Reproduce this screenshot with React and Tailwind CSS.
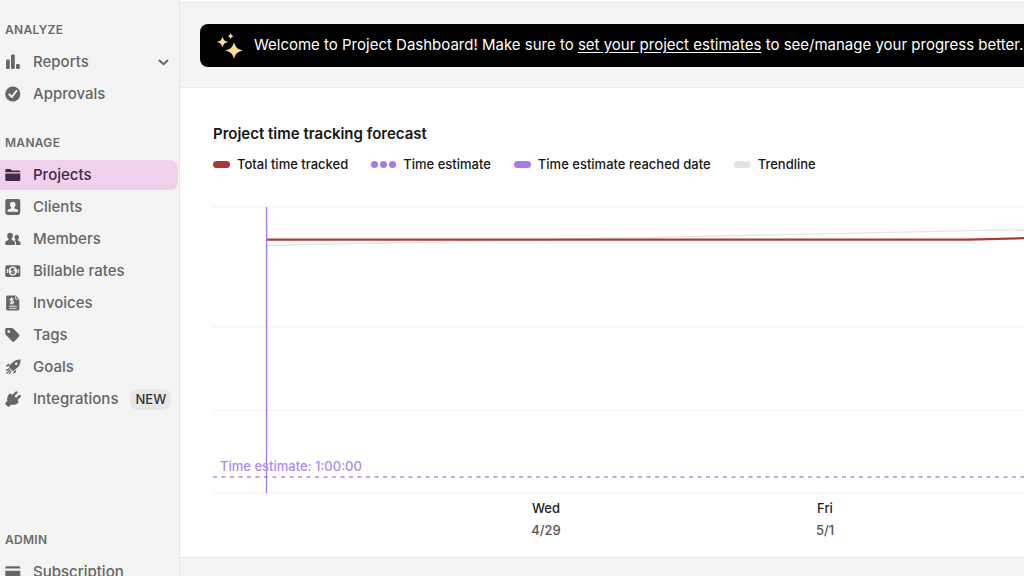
import React from 'react'

function Icon({ children }) {
    return (
        <svg viewBox="0 0 16 16" className="size-4 shrink-0" fill="currentColor" aria-hidden="true">
            {children}
        </svg>
    )
}

const icons = {
    reports: (
        <Icon>
            <rect x="1" y="5.5" width="3.8" height="9.5" rx="1.3" />
            <rect x="6" y="0.5" width="3.8" height="14.5" rx="1.3" />
            <rect x="11" y="10" width="3.8" height="5" rx="1.3" />
        </Icon>
    ),
    approvals: (
        <Icon>
            <circle cx="7.8" cy="8" r="7.6" />
            <path d="M4.2 8.4 6.8 11l4.6-6" fill="none" stroke="#f4f4f4" strokeWidth="2" strokeLinecap="round" strokeLinejoin="round" />
        </Icon>
    ),
    projects: (
        <Icon>
            <path d="M1.5 2h3.6c.5 0 .8.2 1.1.6l.6.9h7c.9 0 1.5.6 1.5 1.3v.5H.3V3.2C.3 2.5.8 2 1.5 2Z" />
            <path d="M.3 6.5h15v6.2c0 .8-.6 1.4-1.4 1.4H1.7c-.8 0-1.4-.6-1.4-1.4Z" />
        </Icon>
    ),
    clients: (
        <Icon>
            <rect x="0.3" y="0" width="15" height="16" rx="2.4" />
            <path d="M7.8 2.8c1.7 0 2.8 1.1 2.8 2.8 0 1.1-.5 2.1-1.2 2.7v1.1c1.6.4 3 .9 3.6 1.6v1.7H2.6V11c.6-.7 2-1.2 3.6-1.6V8.3c-.7-.6-1.2-1.6-1.2-2.7 0-1.7 1.1-2.8 2.8-2.8Z" fill="#f4f4f4" />
        </Icon>
    ),
    members: (
        <Icon>
            <path d="M5 1.8c1.7 0 2.9 1.200 2.900 3 0 1.200-.5 2.200-1.200 2.800v1.500c2 .6 3.200 1.200 3.200 2.700v2.300H.3v-2.300c0-1.500 1.200-2.100 3.200-2.700V7.600C2.700 7 2.200 6 2.200 4.800c0-1.800 1.200-3 2.800-3Z" />
            <path d="M11.700 3.800c1.400 0 2.300 1 2.300 2.400 0 .9-.4 1.700-1 2.200v1.300c1.500.4 2.500 1 2.500 2.200v2.200h-4.600v-2.300c0-1-.4-1.700-1.200-2.300l.8-.8V8.400c-.6-.5-1-1.300-1-2.200 0-1.400.9-2.400 2.200-2.400Z" />
        </Icon>
    ),
    rates: (
        <Icon>
            <rect x="0.3" y="2.3" width="15" height="11.6" rx="1.6" />
            <ellipse cx="7.8" cy="8.1" rx="4.300" ry="4.600" fill="#f4f4f4" />
            <path d="M2.300 6v4M13.300 6v4" stroke="#f4f4f4" strokeWidth="1.100" />
            <path d="M9.600 6.500c-.4-.6-1-.8-1.800-.8-1 0-1.700.4-1.700 1.100 0 1.700 3.500.8 3.500 2.500 0 .8-.8 1.200-1.800 1.200-.8 0-1.500-.3-1.900-.9M7.800 4.800v6.600" fill="none" stroke="currentColor" strokeWidth="1.200" />
        </Icon>
    ),
    invoices: (
        <Icon>
            <path d="M2.700.5h8l3.600 3.600v9.700c0 1-.7 1.700-1.600 1.700h-10c-.9 0-1.600-.7-1.600-1.700V2.200c0-1 .7-1.700 1.600-1.700Z" />
            <path d="M10.700.8v3.400h3.500" fill="none" stroke="#f4f4f4" strokeWidth=".8" />
            <path d="M8.400 4.400c-.4-.6-1-.8-1.600-.8-1 0-1.700.4-1.700 1.100 0 1.700 3.500.8 3.500 2.500 0 .8-.8 1.200-1.800 1.200-.8 0-1.500-.3-1.900-.9M6.700 2.500v7" fill="none" stroke="#f4f4f4" strokeWidth="1.200" />
            <path d="M4 11.200h7.600M4 13.300h7.600" stroke="#f4f4f4" strokeWidth=".9" />
        </Icon>
    ),
    tags: (
        <Icon>
            <path fillRule="evenodd" d="M1.600 1h5.200c.6 0 1.100.2 1.500.6l5.600 5.700c.7.700.7 1.700 0 2.400l-4.400 4.500c-.7.700-1.700.7-2.400 0L.9 8.100C.5 7.700.2 7.200.2 6.600V2.400C.2 1.600.8 1 1.600 1Zm2.200 2.200a1.400 1.400 0 1 0 0 2.800 1.400 1.400 0 0 0 0-2.800Z" />
        </Icon>
    ),
    goals: (
        <Icon>
            <path fillRule="evenodd" d="M15.500.4c.2 4-1 6.700-4.700 9.700L8 12.200 3.800 8l2-2.900C8.700 1.600 11.500.4 15.500.4Zm-4.300 3a1.300 1.300 0 1 0 0 2.600 1.300 1.300 0 0 0 0-2.600Z" />
            <path d="M4.900 4.900 3.600 7.200.7 7.500l1.800-2.200c.6-.6 1.400-.6 2.400-.4ZM11 11.100l-2.300 1.300-.3 2.900 2.200-1.800c.6-.6.6-1.400.4-2.400Z" />
            <path d="m4 9.500-2.600 2M6.300 12l-2 2.700M4.800 11l-3 3.300" stroke="currentColor" strokeWidth="1.200" strokeLinecap="round" />
        </Icon>
    ),
    integrations: (
        <Icon>
            <path d="m5 2.200 8.800 8.700c-1.800 2.200-4.700 3.400-7.600 2.800l-1.800 1.800c-.5.5-1.100.5-1.600 0L.5 13.300c-.5-.5-.5-1.100 0-1.600l1.800-1.800C1.500 7 2.900 4 5 2.200Z" />
            <path d="M8 5 11.300 1.500M11.300 8.500l3.400-3.400" stroke="currentColor" strokeWidth="2.500" strokeLinecap="round" />
            <path d="M5.600 3 8.300 3.900l4 4 .9 2.800Z" />
        </Icon>
    ),
    subscription: (
        <Icon>
            <path d="M1.900 2.200h11.800c.9 0 1.600.6 1.600 1.500v.9H.3v-.9c0-.9.7-1.500 1.600-1.500ZM.3 6.700h15v5.600c0 .9-.7 1.500-1.600 1.500H1.900c-.9 0-1.600-.6-1.600-1.500Z" />
        </Icon>
    ),
}

const sections = [
    {
        title: 'Analyze',
        items: [
            { label: 'Reports', icon: icons.reports, expandable: true },
            { label: 'Approvals', icon: icons.approvals },
        ],
    },
    {
        title: 'Manage',
        items: [
            { label: 'Projects', icon: icons.projects, active: true },
            { label: 'Clients', icon: icons.clients },
            { label: 'Members', icon: icons.members },
            { label: 'Billable rates', icon: icons.rates },
            { label: 'Invoices', icon: icons.invoices },
            { label: 'Tags', icon: icons.tags },
            { label: 'Goals', icon: icons.goals },
            { label: 'Integrations', icon: icons.integrations, badge: 'NEW' },
        ],
    },
    {
        title: 'Admin',
        items: [{ label: 'Subscription', icon: icons.subscription }],
    },
]

function NavItem({ item }) {
    return (
        <li>
            <a
                href="#"
                aria-current={item.active ? 'page' : undefined}
                className={
                    item.active
                        ? 'flex h-[30px] items-center gap-3 rounded-r-lg bg-[#f1d0ed] pl-[5px] pr-[7px] text-[#412a4c]'
                        : 'flex h-[30px] items-center gap-3 pl-[5px] pr-[7px] text-[#666]'
                }
            >
                {item.icon}
                <span>{item.label}</span>
                {item.expandable && (
                    <svg viewBox="0 0 16 16" className="ml-auto size-4" fill="none" stroke="currentColor" strokeWidth="2" strokeLinecap="round" strokeLinejoin="round">
                        <path d="m4.500 6.500 4 3.800 4-3.800" />
                    </svg>
                )}
                {item.badge && (
                    <span className="ml-auto rounded-lg bg-[#e7e7e7] px-[5px] text-[13px] leading-[21px] text-[#333]">
                        {item.badge}
                    </span>
                )}
            </a>
        </li>
    )
}

function NavSection({ section }) {
    return (
        <section className="last:mt-auto">
            <h2 className="pl-[5px] text-xs leading-4 font-semibold tracking-wide text-[#6b6b6b] uppercase">
                {section.title}
            </h2>
            <ul className="mt-[9px] flex flex-col gap-0.5">
                {section.items.map((item) => (
                    <NavItem key={item.label} item={item} />
                ))}
            </ul>
        </section>
    )
}

function Sidebar() {
    return (
        <nav className="-mb-[11px] flex w-[180px] shrink-0 flex-col gap-[26px] border-r border-[#e6e6e6] bg-[#f4f4f4] pt-[22px] pr-px text-[15px] font-medium">
            {sections.map((section) => (
                <NavSection key={section.title} section={section} />
            ))}
        </nav>
    )
}

function Banner() {
    return (
        <div className="border-y border-[#e8e8e8] bg-[#f4f4f4] pt-[21px] pb-5 pl-5">
            <div className="flex h-[43px] items-center gap-2.5 rounded-l-lg bg-black pl-4 whitespace-nowrap text-white">
                <svg viewBox="0 0 28 28" className="size-7 shrink-0" fill="#fddb98" aria-hidden="true">
                    <path d="M18 10c1.400 5.200 3 6.800 8.500 8.500-5.500 1.700-7.100 3.300-8.500 8.500-1.400-5.200-3-6.800-8.500-8.500C15 16.800 16.600 15.200 18 10Z" />
                    <path d="M6.500 4.500C7.500 8 8.500 9 12 10c-3.500 1-4.500 2-5.500 5.500C5.500 12 4.500 11 1 10c3.500-1 4.500-2 5.500-5.500Z" />
                    <path d="M14.700 1c.6 2 1.100 2.500 3 3.200-1.900.6-2.400 1.100-3 3.100-.6-2-1.100-2.500-3-3.100 1.900-.7 2.400-1.200 3-3.200Z" />
                </svg>
                <p className="text-[15px]">
                    Welcome to Project Dashboard! Make sure to{' '}
                    <a href="#" className="underline underline-offset-2">set your project estimates</a>
                    {' '}to see/manage your progress better.
                </p>
            </div>
        </div>
    )
}

function Legend() {
    return (
        <ul className="flex gap-[23px] text-[13px] leading-4 font-medium whitespace-nowrap">
            <li className="flex items-center gap-[7px]">
                <span className="h-[7px] w-[17px] rounded-full bg-[#a83a36]" />
                Total time tracked
            </li>
            <li className="flex items-center gap-[7px]">
                <span className="flex gap-0.5">
                    <span className="size-[7px] rounded-full bg-[#a57af0]" />
                    <span className="size-[7px] rounded-full bg-[#a57af0]" />
                    <span className="size-[7px] rounded-full bg-[#a57af0]" />
                </span>
                Time estimate
            </li>
            <li className="flex items-center gap-[7px]">
                <span className="h-[7px] w-[17px] rounded-full bg-[#a57af0]" />
                Time estimate reached date
            </li>
            <li className="flex items-center gap-[7px]">
                <span className="h-[7px] w-[17px] rounded-full bg-[#e3e3e3]" />
                Trendline
            </li>
        </ul>
    )
}

const gridLines = [1, 121, 204, 287]

const ticks = [
    { x: 333, day: 'Wed', date: '4/29' },
    { x: 612, day: 'Fri', date: '5/1' },
]

function ForecastChart() {
    return (
        <svg className="mt-[34px] block h-[340px] w-full" role="img" aria-label="Project time tracking forecast">
            {gridLines.map((y) => (
                <line key={y} x1="0" x2="100%" y1={y} y2={y} stroke="#f6f6f6" strokeWidth="1.500" />
            ))}
            <path d="M54 39.500 811 23.500" stroke="#e6e6e6" strokeWidth="1.300" fill="none" />
            <path d="M54 33.600H755L811 32.200" stroke="#aa3c38" strokeWidth="2.200" fill="none" />
            <line x1="0" x2="100%" y1="271" y2="271" stroke="#a98af0" strokeWidth="1.300" strokeDasharray="4 4.500" />
            <line x1="53.500" x2="53.500" y1="1" y2="287" stroke="#a57af0" strokeWidth="1.300" />
            <text x="7" y="265" fill="#ae8bee" className="text-[13px] font-medium">
                Time estimate: 1:00:00
            </text>
            {ticks.map((tick) => (
                <g key={tick.day} textAnchor="middle" className="text-[13px] font-medium">
                    <text x={tick.x} y="307" fill="#222">{tick.day}</text>
                    <text x={tick.x} y="329" fill="#555">{tick.date}</text>
                </g>
            ))}
        </svg>
    )
}

export default function App() {
    return (
        <div className="flex h-screen overflow-hidden bg-white font-['Inter',sans-serif] text-[#161616]">
            <Sidebar />
            <main className="flex min-w-0 flex-1 flex-col overflow-hidden pt-0.5">
                <Banner />
                <section className="pt-9 pb-[11px] pl-[33px]">
                    <h1 className="mb-3 text-[15px] leading-5 font-semibold">Project time tracking forecast</h1>
                    <Legend />
                    <ForecastChart />
                </section>
                <div className="flex-1 border-t border-[#e6e6e6] bg-[#f4f4f4]" />
            </main>
        </div>
    )
}
